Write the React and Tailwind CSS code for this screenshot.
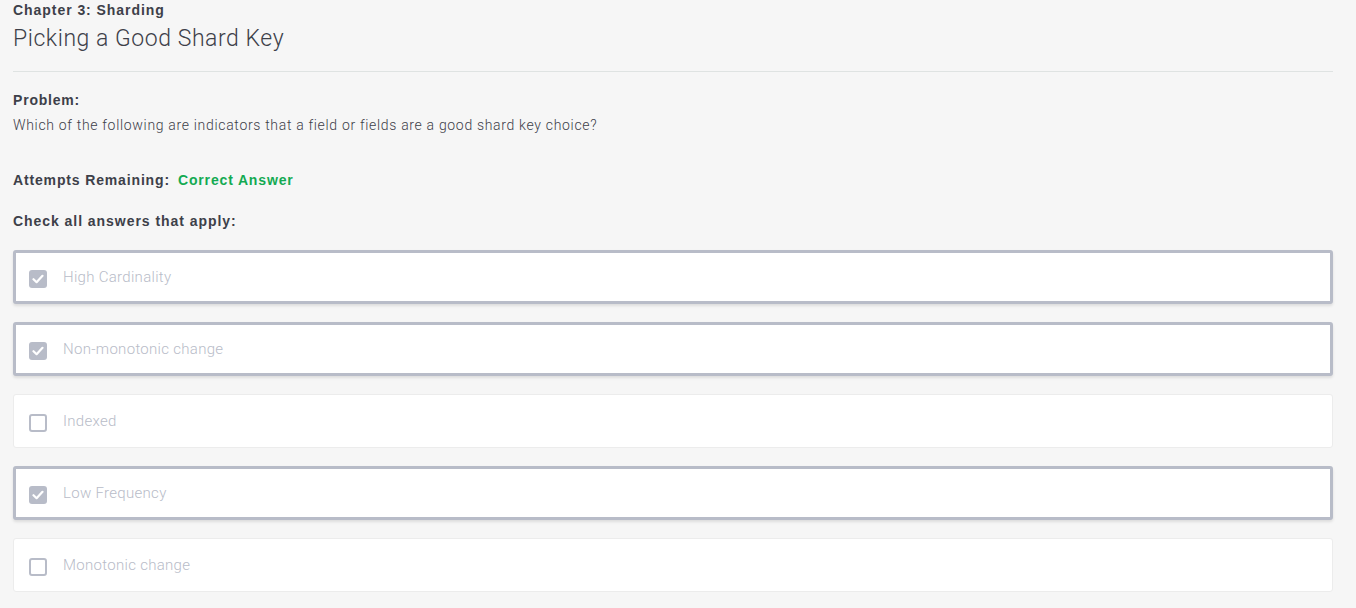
import React from 'react';

const options = [
  { label: 'High Cardinality', checked: true },
  { label: 'Non-monotonic change', checked: true },
  { label: 'Indexed', checked: false },
  { label: 'Low Frequency', checked: true },
  { label: 'Monotonic change', checked: false },
];

const Checkbox = ({ checked }) =>
  checked ? (
    <span className="w-[18px] h-[18px] rounded-[3px] bg-[#b8bcc8] flex items-center justify-center shrink-0">
      <svg width="12" height="10" viewBox="0 0 12 10" fill="none">
        <path d="M1.5 5.2L4.6 8.2L10.5 1.8" stroke="white" strokeWidth="2.2" strokeLinecap="round" strokeLinejoin="round" />
      </svg>
    </span>
  ) : (
    <span className="w-[18px] h-[18px] rounded-[3px] border-2 border-[#b8bcc8] bg-white shrink-0" />
  );

const Option = ({ label, checked }) => (
  <div
    className={
      checked
        ? 'h-[54px] bg-white rounded-[3px] border-[3px] border-[#b8bcc8] shadow-[0_2px_3px_rgba(0,0,0,0.1)] flex items-center pl-[13px] pr-4'
        : 'h-[54px] bg-white rounded-[3px] border border-[#ececec] flex items-center pl-[15px] pr-4'
    }
  >
    <div className="flex items-start gap-[16px] mt-[3px]">
      <Checkbox checked={checked} />
      <span className="text-[15px] font-light text-[#b8bcc8] -mt-[4px] leading-[22px] tracking-[0.3px]">{label}</span>
    </div>
  </div>
);

export default function App() {
  return (
    <div className="min-h-screen bg-[#f6f6f6] px-[13px] pr-[23px] font-['Roboto',sans-serif] text-[#3d4049]">
      <div className="text-[14px] font-bold leading-[18px] pt-[1px] font-['Liberation_Sans',sans-serif] tracking-[0.95px]">Chapter 3: Sharding</div>
      <h1 className="text-[23px] font-light leading-[30px] mt-[5px] tracking-[0.55px]">Picking a Good Shard Key</h1>
      <hr className="mt-[17px] border-0 border-t border-[#dfe3e2]" />
      <div className="mt-[19px] text-[14px] font-bold leading-[18px] font-['Liberation_Sans',sans-serif] tracking-[0.8px]">Problem:</div>
      <p className="mt-[7px] text-[14px] font-light leading-[18px] tracking-[0.68px]">Which of the following are indicators that a field or fields are a good shard key choice?</p>
      <div className="mt-[37px] text-[14px] font-bold leading-[18px] font-['Liberation_Sans',sans-serif] tracking-[0.85px] flex gap-[8px]">
        <span>Attempts Remaining:</span>
        <span className="text-[#13aa52]">Correct Answer</span>
      </div>
      <div className="mt-[23px] text-[14px] font-bold leading-[18px] font-['Liberation_Sans',sans-serif] tracking-[0.95px]">Check all answers that apply:</div>
      <div className="mt-[20px] flex flex-col gap-[18px]">
        {options.map((o) => (
          <Option key={o.label} {...o} />
        ))}
      </div>
    </div>
  );
}
